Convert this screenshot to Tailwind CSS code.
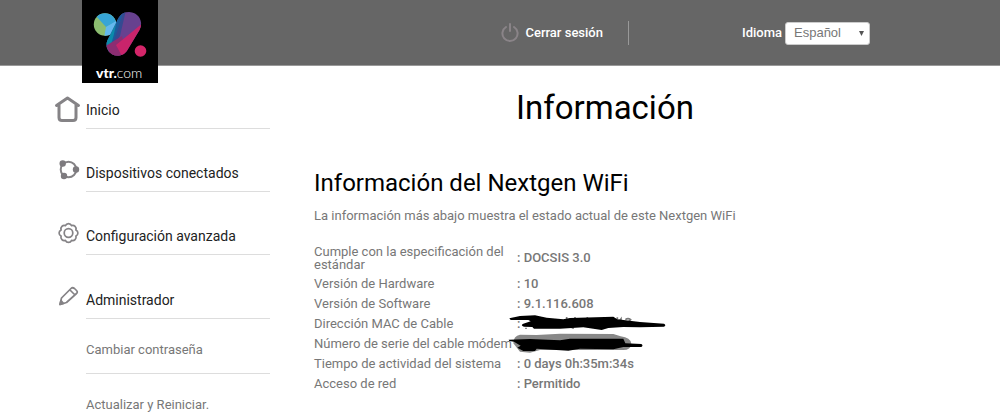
<!DOCTYPE html>
<html lang="es">
<head>
    <meta charset="UTF-8">
    <meta name="viewport" content="width=device-width, initial-scale=1.0">
    <title>Información - Nextgen WiFi</title>
    <script src="https://cdn.jsdelivr.net/npm/@tailwindcss/browser@4"></script>
</head>
<body class="bg-white font-['Roboto','Open_Sans',sans-serif] text-[#777] overflow-x-hidden">

<!-- Cabecera -->
<header class="h-[66px] bg-[#666] border-b border-[#999] pl-[82px] pr-[130px] flex justify-between items-start text-white">
    <a href="#" title="vtr.com" class="relative z-10 shrink-0">
        <svg class="w-[76px] h-[83px]" viewBox="0 0 76 83">
            <defs>
                <clipPath id="hoja"><circle cx="23" cy="24.500" r="11.200"/></clipPath>
                <clipPath id="brazo"><path d="M36.500 18A12 12 0 0 1 57.500 30L44.700 51.300A11.200 11.200 0 0 1 25.300 40.500Z"/></clipPath>
            </defs>
            <rect width="76" height="83" fill="#000"/>
            <g clip-path="url(#hoja)">
                <rect x="10" y="12" width="26" height="26" fill="#8cbd70"/>
                <path d="M10 10H36V21L24 27L14 16Z" fill="#37a5d6"/>
                <path d="M36 20L24 27L22 38H36Z" fill="#63b8ee"/>
            </g>
            <g clip-path="url(#brazo)">
                <rect x="22" y="10" width="40" height="50" fill="#67418f"/>
                <path d="M22 10H37L35 32L28 52H22Z" fill="#0b8aab"/>
                <path d="M37 10L32 34L27 52L33 42L42 10Z" fill="#1c5b9b"/>
                <path d="M42 10L37 26L29 49L38 36L44 10Z" fill="#354a91"/>
                <path d="M22 47L40 36L46 60H22Z" fill="#8c2d72"/>
                <path d="M62 22L34 45L42 60L62 44Z" fill="#c9246b"/>
            </g>
            <circle cx="58.500" cy="51" r="5.800" fill="#d42569"/>
            <text x="14" y="78" font-size="14" fill="#fff" font-family="Lato, sans-serif"><tspan font-weight="900">vtr.</tspan><tspan font-weight="300">com</tspan></text>
        </svg>
    </a>
    <div class="flex items-center pt-[21px]">
        <button type="button" class="flex items-center gap-[6px] text-[13px] leading-6 font-medium">
            <svg class="w-[18px] h-[20px]" viewBox="0 0 18 20" fill="none" stroke="#8a8488" stroke-width="2" stroke-linecap="round">
                <path d="M9 1V8M5 4A7.600 7.600 0 1 0 13 4"/>
            </svg>
            Cerrar sesión
        </button>
        <span class="w-px h-6 bg-[#999] ml-[25px] mr-[113px]"></span>
        <label for="idioma" class="text-[13px] font-medium mr-[3px]">Idioma</label>
        <span class="relative">
            <select id="idioma" class="block appearance-none w-[85px] h-[23px] bg-white border border-[#ccc] rounded-[3px] pl-2 text-[13px] leading-5 text-[#777] font-['Liberation_Sans',sans-serif]">
                <option>Español</option>
            </select>
            <svg class="absolute right-[6px] top-[9px] w-[5px] h-[5px] pointer-events-none" viewBox="0 0 5 5"><path d="M0 0H5L2.500 5Z" fill="#555"/></svg>
        </span>
    </div>
</header>

<div class="flex">
    <!-- Menú lateral -->
    <nav class="w-[270px] shrink-0 pl-[54px] pt-[27px] text-sm leading-5 text-[#222]">
        <ul>
            <li>
                <a href="#" class="flex gap-[4px] h-[63px]">
                    <svg class="w-7 h-8 shrink-0" viewBox="0 0 28 32" fill="none" stroke="#858386" stroke-width="3" stroke-linecap="round" stroke-linejoin="round">
                        <path d="M2.500 12.500L13.500 5L24.500 12.500M5 12V24.500Q5 27.500 8 27.500H19Q22 27.500 22 24.500V12"/>
                    </svg>
                    <span class="grow self-start border-b border-[#ddd] pt-[7px] pb-[8px]">Inicio</span>
                </a>
            </li>
            <li>
                <a href="#" class="flex gap-[4px] h-[63px]">
                    <svg class="w-7 h-8 shrink-0" viewBox="0 0 28 32" fill="none" stroke="#858386" stroke-width="2">
                        <circle cx="14.500" cy="13.500" r="7.800"/>
                        <g fill="#7d7a7e" stroke="none"><circle cx="8.700" cy="7.500" r="3.200"/><circle cx="22" cy="13.500" r="3.200"/><circle cx="10" cy="20" r="3.200"/></g>
                    </svg>
                    <span class="grow self-start border-b border-[#ddd] pt-[7px] pb-[8px]">Dispositivos conectados</span>
                </a>
            </li>
            <li>
                <a href="#" class="flex gap-[4px] h-[64px]">
                    <svg class="w-7 h-8 shrink-0" viewBox="0 0 28 32" fill="none" stroke="#858386" stroke-width="1.700" stroke-linejoin="round">
                        <path d="M21.900 17.100A3.400 3.400 0 0 1 17.600 21.400A3.400 3.400 0 0 1 11.400 21.400A3.400 3.400 0 0 1 7.100 17.100A3.400 3.400 0 0 1 7.100 10.900A3.400 3.400 0 0 1 11.400 6.600A3.400 3.400 0 0 1 17.600 6.600A3.400 3.400 0 0 1 21.900 10.900A3.400 3.400 0 0 1 21.900 17.100Z"/>
                        <circle cx="14.500" cy="14" r="4.300"/>
                    </svg>
                    <span class="grow self-start border-b border-[#ddd] pt-[7px] pb-[8px]">Configuración avanzada</span>
                </a>
            </li>
            <li>
                <a href="#" class="flex gap-[4px] h-[63px]">
                    <svg class="w-7 h-8 shrink-0" viewBox="0 0 28 32" fill="none" stroke="#858386" stroke-width="1.700" stroke-linejoin="round">
                        <path d="M6 21.500L7.500 15L17 5.500Q18.500 4 20.500 5.500L22.500 7.500Q24 9 22.500 10.500L12.500 19.500ZM16 7L21 12"/>
                        <path d="M6 21.500L7 17.500L9.500 20.500Z" fill="#858386"/>
                    </svg>
                    <span class="grow self-start border-b border-[#ddd] pt-[7px] pb-[8px]">Administrador</span>
                </a>
                <ul class="ml-8 text-[13px] leading-5 text-[#777]">
                    <li class="border-b border-[#ddd] -mt-[6px] pb-[13px]"><a href="#">Cambiar contraseña</a></li>
                    <li class="pt-[21px]"><a href="#">Actualizar y Reiniciar.</a></li>
                </ul>
            </li>
        </ul>
    </nav>

    <!-- Contenido -->
    <main class="grow pl-[44px] pr-[104px] pt-5">
        <h1 class="text-center text-[33px] leading-[44px] text-black">Información</h1>
        <h2 class="mt-[36px] text-2xl leading-[34px] text-black">Información del Nextgen WiFi</h2>
        <p class="mt-[6px] text-[13px] leading-5">La información más abajo muestra el estado actual de este Nextgen WiFi</p>
        <div class="relative mt-[16px]">
            <table class="text-[13px] leading-5">
                <tbody>
                    <tr class="h-[32px]"><th scope="row" class="w-[203px] max-w-[203px] text-left font-normal leading-[13px]">Cumple con la especificación del estándar</th><td class="font-medium">: DOCSIS 3.0</td></tr>
                    <tr><th scope="row" class="text-left font-normal">Versión de Hardware</th><td class="font-medium">: 10</td></tr>
                    <tr><th scope="row" class="text-left font-normal">Versión de Software</th><td class="font-medium">: 9.1.116.608</td></tr>
                    <tr><th scope="row" class="text-left font-normal">Dirección MAC de Cable</th><td class="font-medium">:</td></tr>
                    <tr><th scope="row" class="text-left font-normal whitespace-nowrap">Número de serie del cable módem</th><td class="font-medium">:</td></tr>
                    <tr><th scope="row" class="text-left font-normal">Tiempo de actividad del sistema</th><td class="font-medium">: 0 days 0h:35m:34s</td></tr>
                    <tr><th scope="row" class="text-left font-normal">Acceso de red</th><td class="font-medium">: Permitido</td></tr>
                </tbody>
            </table>
            <!-- Tachones sobre los datos privados -->
            <svg class="absolute left-[194px] top-[72px] w-[164px] h-[40px]" viewBox="24 237 492 120">
                <path d="M200 252V246M225 251V246M262 249V246M352 252V247M363 264V252L355 262M376 254Q384 248 392 254Q388 261 378 262M78 278V282M215 279H222" fill="none" stroke="#777" stroke-width="5"/>
                <path d="M28 250L60 243L105 241L140 248L190 253L210 249L340 245L352 253L420 261L492 266Q500 270 492 275L420 277L370 276L325 279L305 285L250 277L180 281L102 281L97 276L72 275Q60 270 70 266L92 259L85 255L32 255Z" fill="#000"/>
                <path d="M40 325Q40 303 60 299L110 300L180 296L340 297L362 304Q392 308 394 326Q392 345 370 345L120 345L90 353L60 350Z" fill="#888"/>
                <path d="M26 314L90 312L180 316L210 311L370 311L376 325L424 327Q431 331 424 336L370 336L340 343L240 341L205 347L110 341L105 348L70 348L52 338L62 332L42 320L28 318Z" fill="#000"/>
            </svg>
        </div>
    </main>
</div>

</body>
</html>
